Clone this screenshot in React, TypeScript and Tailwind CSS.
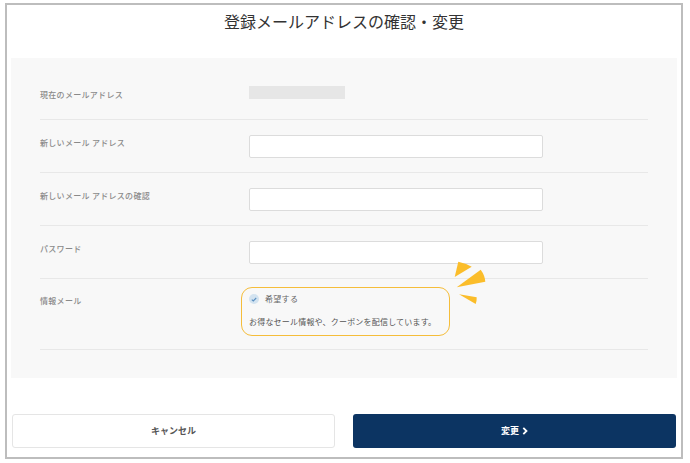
import React from 'react';

const font = { fontFamily: '"Noto Sans CJK JP", "Noto Sans", sans-serif' };

type RowProps = {
  label: string;
  children: React.ReactNode;
};

function InputRow({ label, children }: RowProps) {
  return (
    <div className="flex items-start border-b border-[#e8e8e8] pt-[15px] pb-[14px]">
      <div className="w-[209px] shrink-0 pt-[4px] text-[8px] leading-[8px] font-medium tracking-[0.3px] text-[#8a8a8a]">{label}</div>
      {children}
    </div>
  );
}

function Rays() {
  return (
    <svg className="absolute left-[412px] top-[-19px]" width="40" height="48" viewBox="0 0 40 48">
      <path d="M6.3 1.7 Q13.5 3.2 19.7 6.7 L2.7 17 Z" fill="#fbbd2a" />
      <path d="M4.7 27.3 L28.7 9.7 Q32.8 15.2 33.3 21.7 Z" fill="#fbbd2a" />
      <path d="M7 34.3 L24.7 37.3 Q24.8 40.8 23.7 44 Z" fill="#fbbd2a" />
    </svg>
  );
}

export default function App() {
  return (
    <div className="w-[690px] h-[463px] bg-white pt-[3px] pl-[5px]" style={font}>
      <div className="w-[678px] h-[456px] border-2 border-[#bdbdbd] flex flex-col">
        <div className="h-[53px] shrink-0 pt-[3px] text-center text-[16px] leading-[26px] font-normal text-[#333]">
          登録メールアドレスの確認・変更
        </div>

        <div className="mx-[4px] h-[320px] bg-[#f8f8f8] px-[29px] pb-[28px]">
          <div className="flex items-start h-[62px] border-b border-[#e8e8e8] pt-[28px]">
            <div className="w-[209px] shrink-0 pt-[5px] text-[8px] leading-[8px] font-medium tracking-[0.3px] text-[#8a8a8a]">
              現在のメールアドレス
            </div>
            <div className="w-[96px] h-[13px] bg-[#e6e6e6]" />
          </div>

          <InputRow label="新しいメール アドレス">
            <input className="w-[294px] h-[23px] bg-white border border-[#dcdcdc] rounded-[2px] outline-none" />
          </InputRow>
          <InputRow label="新しいメール アドレスの確認">
            <input className="w-[294px] h-[23px] bg-white border border-[#dcdcdc] rounded-[2px] outline-none" />
          </InputRow>
          <InputRow label="パスワード">
            <input type="password" className="w-[294px] h-[23px] bg-white border border-[#dcdcdc] rounded-[2px] outline-none" />
          </InputRow>

          <div className="relative flex items-start border-b border-[#e8e8e8] pt-[8px] pb-[13px]">
            <div className="w-[201px] shrink-0 pt-[10px] text-[8px] leading-[8px] font-medium tracking-[0.3px] text-[#8a8a8a]">情報メール</div>
            <div className="w-[209px] h-[49px] rounded-[11px] border border-[#f5bd3a] pl-[7px] pt-[6px]">
              <div className="flex items-center h-[10px]">
                <span className="w-[10px] h-[10px] rounded-full bg-[#d3e3f0] flex items-center justify-center">
                  <svg width="6" height="5" viewBox="0 0 6 5">
                    <path d="M0.8 2.6 L2.3 4 L5.2 1" fill="none" stroke="#5a8fc0" strokeWidth="1.1" />
                  </svg>
                </span>
                <span className="ml-[6px] text-[8px] leading-[8px] tracking-[0.3px] text-[#666]">希望する</span>
              </div>
              <div className="mt-[14px] text-[8px] leading-[8px] tracking-[0.2px] text-[#555]">
                お得なセール情報や、クーポンを配信しています。
              </div>
            </div>
            <Rays />
          </div>
        </div>

        <div className="flex gap-[18px] px-[5px] mt-[36px]">
          <button className="w-[323px] h-[34px] bg-white border border-[#e5e5e5] rounded-[3px] text-[9px] font-bold text-[#555]">
            キャンセル
          </button>
          <button className="w-[323px] h-[34px] bg-[#0c3462] rounded-[3px] text-[9px] font-bold text-white flex items-center justify-center gap-[3px]">
            変更
            <svg width="6" height="8" viewBox="0 0 6 8">
              <path d="M1.3 0.8 L4.5 4 L1.3 7.2" fill="none" stroke="#fff" strokeWidth="1.8" />
            </svg>
          </button>
        </div>
      </div>
    </div>
  );
}
